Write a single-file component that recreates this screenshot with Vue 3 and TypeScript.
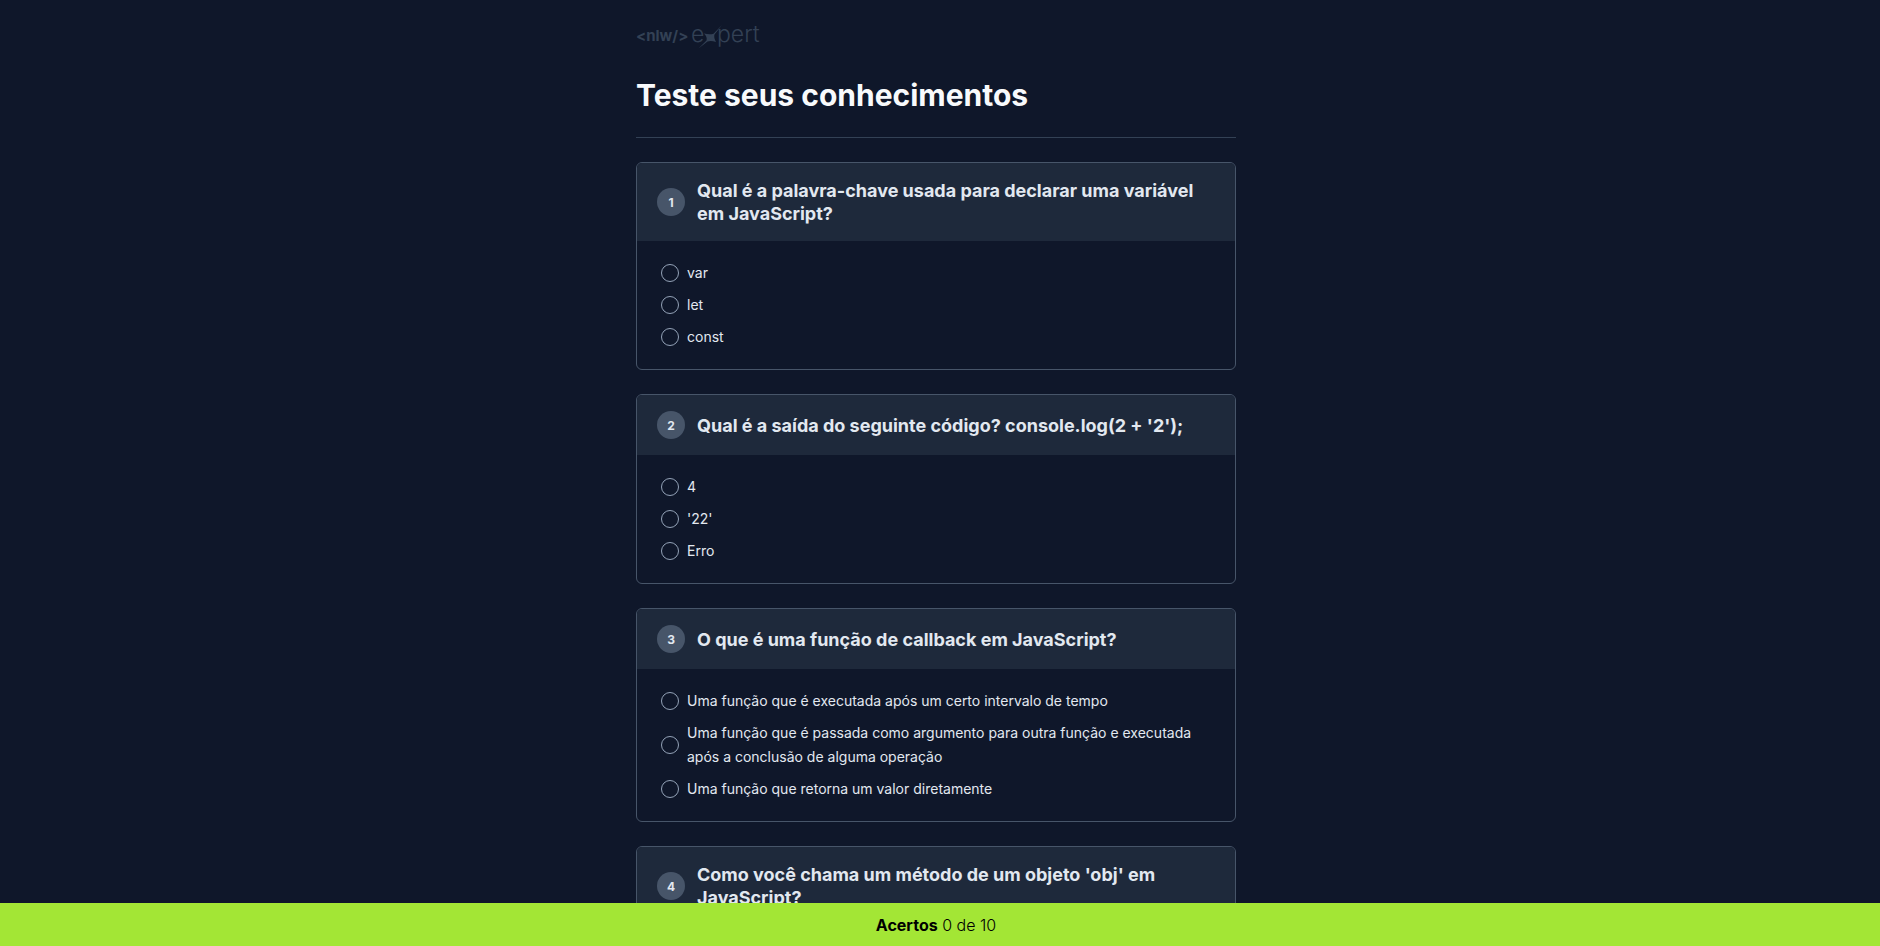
<script setup lang="ts">
import { ref, computed } from 'vue'

interface Question {
  title: string
  options: string[]
}

const total = 10

const questions: Question[] = [
  {
    title: 'Qual é a palavra-chave usada para declarar uma variável em JavaScript?',
    options: ['var', 'let', 'const'],
  },
  {
    title: "Qual é a saída do seguinte código? console.log(2 + '2');",
    options: ['4', "'22'", 'Erro'],
  },
  {
    title: 'O que é uma função de callback em JavaScript?',
    options: [
      'Uma função que é executada após um certo intervalo de tempo',
      'Uma função que é passada como argumento para outra função e executada após a conclusão de alguma operação',
      'Uma função que retorna um valor diretamente',
    ],
  },
  {
    title: "Como você chama um método de um objeto 'obj' em JavaScript?",
    options: [],
  },
]

const correct = [2, 1, 1]
const answers = ref<(number | null)[]>(questions.map(() => null))
const hits = computed(() => answers.value.filter((a, i) => a !== null && a === correct[i]).length)
</script>

<template>
  <div class="page">
    <main class="scroll">
      <div class="container">
        <header class="top">
          <svg class="logo" width="126" height="24" viewBox="0 0 126 24" role="img" aria-label="nlw expert">
            <text class="nlw" x="0" y="17">&lt;nlw/&gt;</text>
            <text class="expert" x="55" y="18">e</text>
            <path d="M86 1 L78.500 10.500 Q77.500 13.500 80 18 Q75 16.500 71.500 17.500 L62.500 24.500 L70.500 16.500 Q71.500 13 68 9.500 Q73.500 11 77.500 9.800 Z" />
            <text class="expert" x="81" y="18">pert</text>
          </svg>
          <h1>Teste seus conhecimentos</h1>
        </header>
        <hr />
        <form class="quiz">
          <section v-for="(q, qi) in questions" :key="qi" class="card">
            <div class="head">
              <span class="num">{{ qi + 1 }}</span>
              <h2 :id="`q${qi}`">{{ q.title }}</h2>
            </div>
            <div class="options" role="radiogroup" :aria-labelledby="`q${qi}`">
              <div v-for="(o, oi) in q.options" :key="oi" class="option">
                <input :id="`q${qi}-o${oi}`" v-model="answers[qi]" type="radio" :name="`question-${qi}`" :value="oi" />
                <label :for="`q${qi}-o${oi}`">{{ o }}</label>
              </div>
            </div>
          </section>
        </form>
      </div>
    </main>
    <footer><strong>Acertos</strong> <span>{{ hits }} de {{ total }}</span></footer>
  </div>
</template>

<style>
body {
  margin: 0;
  background: #0f172a;
}
</style>

<style scoped>
.page {
  height: 100vh;
  display: flex;
  flex-direction: column;
  background: #0f172a;
  color: #e2e8f0;
  font-family: Inter, 'Liberation Sans', sans-serif;
}
.scroll {
  flex: 1;
  min-height: 0;
  padding-right: 8px;
  overflow-y: auto;
  scrollbar-width: none;
}
.container {
  box-sizing: border-box;
  width: 100%;
  max-width: 600px;
  margin: 0 auto;
  padding: 24px 0;
}
.top {
  display: flex;
  flex-direction: column;
  gap: 28px;
}
.logo {
  display: block;
  fill: #334155;
  overflow: visible;
}
.nlw {
  font: 700 15px Inter, sans-serif;
}
.expert {
  font: 300 23px Inter, sans-serif;
}
h1 {
  margin: 0;
  font-size: 30px;
  line-height: 38px;
  font-weight: 700;
  color: #f8fafc;
}
hr {
  height: 1px;
  margin: 23px 0 24px;
  border: 0;
  background: #334155;
}
.quiz {
  display: flex;
  flex-direction: column;
  gap: 24px;
}
.card {
  border: 1px solid #475569;
  border-radius: 6px;
  overflow: hidden;
}
.head {
  display: flex;
  align-items: center;
  gap: 12px;
  padding: 16px 20px;
  background: #1e293b;
}
.num {
  flex: none;
  display: grid;
  place-items: center;
  width: 28px;
  height: 28px;
  border-radius: 50%;
  background: #475569;
  font-size: 12px;
  font-weight: 700;
}
h2 {
  margin: 0;
  font-size: 18px;
  line-height: 23px;
  font-weight: 700;
}
.options {
  display: flex;
  flex-direction: column;
  gap: 8px;
  padding: 20px 24px;
}
.option {
  display: flex;
  align-items: center;
  gap: 8px;
}
.option input {
  flex: none;
  appearance: none;
  box-sizing: border-box;
  width: 18px;
  height: 18px;
  margin: 0;
  border: 1px solid #94a3b8;
  border-radius: 50%;
}
.option input:checked {
  background: #a3e635;
  border-color: #a3e635;
}
.option label {
  font-size: 14px;
  line-height: 24px;
}
footer {
  padding: 13px 20px 11px 12px;
  background: #a3e635;
  color: #000;
  font-size: 16px;
  line-height: 19px;
  text-align: center;
}
footer span {
  font-weight: 300;
}
</style>
